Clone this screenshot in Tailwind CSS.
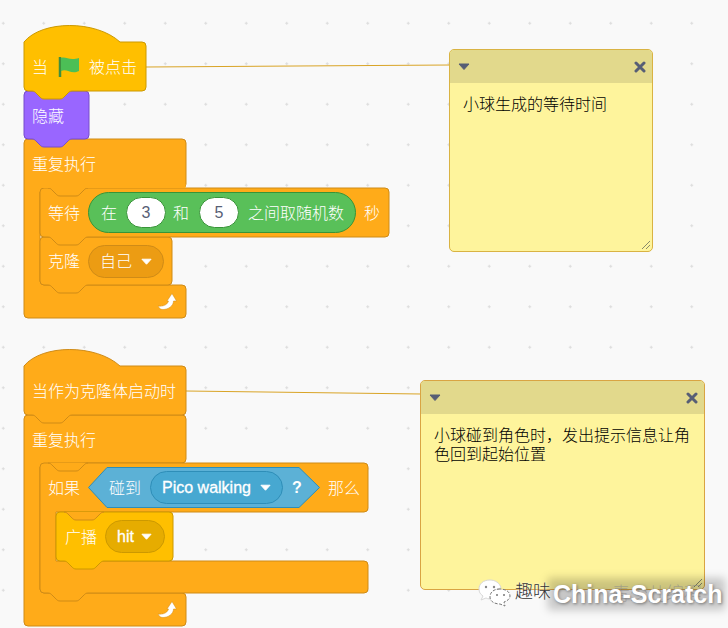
<!DOCTYPE html>
<html lang="zh">
<head>
  <meta charset="UTF-8" />
  <title>Scratch 脚本</title>
  <script src="https://cdn.jsdelivr.net/npm/@tailwindcss/browser@4"></script>
</head>
<body class="bg-[#f9f9f9]">
  <!-- workspace: blocks and comments sit on a free canvas -->
  <div class="relative w-[728px] h-[628px] overflow-hidden bg-[#f9f9f9] bg-[radial-gradient(circle,#dcdcdc_1px,transparent_1.4px)] bg-[size:40.5px_40.5px] bg-[position:-17px_3px] font-['Liberation_Sans','Noto_Sans_CJK_SC',sans-serif] font-light text-[16px] text-white">

    <!-- block shapes, drawn bottom up so tabs lie on the block below -->
    <svg class="absolute left-0 top-0" width="728" height="628" viewBox="0 0 728 628">
      <!-- comment links -->
      <path d="M146 67 L450 65" stroke="#d9a426" stroke-width="1" fill="none" />
      <path d="M186 391 L421 394" stroke="#d9a426" stroke-width="1" fill="none" />

      <!-- stack 1: repeat -->
      <path fill="#ffab19" stroke="#cf8b17" d="M24 143 q0-4 4-4 H182 q4 0 4 4 V184 q0 4-4 4 H88 L56 188 L40 192 V281 q0 4 4 4 H182 q4 0 4 4 V314 q0 4-4 4 H28 q-4 0-4-4 Z" />
      <path fill="#ffab19" stroke="#cf8b17" d="M40 241 q0-4 4-4 H168 q4 0 4 4 V281 q0 4-4 4 H88 c-2 0-3 1-4 2 l-4 4 c-1 1-2 2-4 2 H60 c-2 0-3-1-4-2 l-4-4 c-1-1-2-2-4-2 H44 q-4 0-4-4 Z" />
      <path fill="#ffab19" stroke="#cf8b17" d="M40 192 q0-4 4-4 H385 q4 0 4 4 V233 q0 4-4 4 H88 c-2 0-3 1-4 2 l-4 4 c-1 1-2 2-4 2 H60 c-2 0-3-1-4-2 l-4-4 c-1-1-2-2-4-2 H44 q-4 0-4-4 Z" />
      <path fill="#ffab19" stroke="#cf8b17" d="M48 188 c2 0 3 1 4 2 l4 4 c1 1 2 2 4 2 H76 c2 0 3-1 4-2 l4-4 c1-1 2-2 4-2" />
      <rect x="40.500" y="184" width="145" height="4" fill="#ffab19" />
      <path fill="#9966ff" stroke="#774dcb" d="M24 95 q0-4 4-4 H85 q4 0 4 4 V135 q0 4-4 4 H72 c-2 0-3 1-4 2 l-4 4 c-1 1-2 2-4 2 H44 c-2 0-3-1-4-2 l-4-4 c-1-1-2-2-4-2 H28 q-4 0-4-4 Z" />
      <path fill="#ffbf00" stroke="#cc9900" d="M24 42 C42 20 96 20 120 42 H142 q4 0 4 4 V87 q0 4-4 4 H72 c-2 0-3 1-4 2 l-4 4 c-1 1-2 2-4 2 H44 c-2 0-3-1-4-2 l-4-4 c-1-1-2-2-4-2 H28 q-4 0-4-4 Z" />

      <!-- stack 2: repeat with if -->
      <path fill="#ffab19" stroke="#cf8b17" d="M24 419 q0-4 4-4 H182 q4 0 4 4 V459 q0 4-4 4 H88 L40 467 V589 q0 4 4 4 H182 q4 0 4 4 V622 q0 4-4 4 H28 q-4 0-4-4 Z" />
      <path fill="#ffab19" stroke="#cf8b17" d="M40 467 q0-4 4-4 H364 q4 0 4 4 V508 q0 4-4 4 H104 L56 512 V561 H364 q4 0 4 4 V589 q0 4-4 4 H88 c-2 0-3 1-4 2 l-4 4 c-1 1-2 2-4 2 H60 c-2 0-3-1-4-2 l-4-4 c-1-1-2-2-4-2 H44 q-4 0-4-4 Z" />
      <path fill="#ffab19" stroke="#cf8b17" d="M48 463 c2 0 3 1 4 2 l4 4 c1 1 2 2 4 2 H76 c2 0 3-1 4-2 l4-4 c1-1 2-2 4-2" />
      <path fill="#ffbf00" stroke="#cc9900" d="M56 516 q0-4 4-4 H169 q4 0 4 4 V557 q0 4-4 4 H104 c-2 0-3 1-4 2 l-4 4 c-1 1-2 2-4 2 H76 c-2 0-3-1-4-2 l-4-4 c-1-1-2-2-4-2 H60 q-4 0-4-4 Z" />
      <path fill="#ffab19" stroke="#cf8b17" d="M64 512 c2 0 3 1 4 2 l4 4 c1 1 2 2 4 2 H92 c2 0 3-1 4-2 l4-4 c1-1 2-2 4-2" />
      <path fill="#ffab19" stroke="#cf8b17" d="M24 366 C42 344 96 344 120 366 H182 q4 0 4 4 V411 q0 4-4 4 H72 c-2 0-3 1-4 2 l-4 4 c-1 1-2 2-4 2 H44 c-2 0-3-1-4-2 l-4-4 c-1-1-2-2-4-2 H28 q-4 0-4-4 Z" />
    </svg>

    <!-- stack 1 labels -->
    <div class="absolute left-[24px] top-[42px] flex flex-col">
      <div class="h-[49px] pl-2 flex items-center">
        <span class="translate-y-px">当</span>
        <svg class="ml-[10px] mr-[9px]" width="22" height="22" viewBox="0 0 22 22">
          <path d="M2 1 V21" stroke="#3f8f3f" stroke-width="2.500" fill="none" />
          <path d="M3 2 C8 0 11 5 21 2 V15 C13 19 9 12 3 15 Z" fill="#4cbf56" />
        </svg>
        <span class="translate-y-px">被点击</span>
      </div>
      <div class="h-[48px] pl-2 flex items-center"><span class="translate-y-[2px]">隐藏</span></div>
      <div class="h-[49px] pl-2 flex items-center"><span class="translate-y-px">重复执行</span></div>
      <div class="h-[49px] pl-6 flex items-center">
        <span class="mr-2 translate-y-px">等待</span>
        <div class="h-[41px] w-[268px] rounded-full bg-[#59c059] border border-[#389438] flex items-center pl-3">
          <span class="translate-y-px">在</span>
          <span class="ml-[9px] w-[40px] h-[31px] rounded-full bg-white border border-[#389438] flex items-center justify-center text-[#575e75]">3</span>
          <span class="ml-[7px] translate-y-px">和</span>
          <span class="ml-[10px] w-[40px] h-[31px] rounded-full bg-white border border-[#389438] flex items-center justify-center text-[#575e75]">5</span>
          <span class="ml-[9px] whitespace-nowrap translate-y-px">之间取随机数</span>
        </div>
        <span class="ml-2 translate-y-px">秒</span>
      </div>
      <div class="h-[48px] pl-6 flex items-center">
        <span class="mr-2 translate-y-px">克隆</span>
        <div class="h-[33px] w-[76px] rounded-full bg-[#ec9c13] border border-[#cf8b17] flex items-center pl-[11px]">
          <span class="translate-y-px">自己</span>
          <svg class="ml-[9px]" width="11" height="7" viewBox="0 0 12 7"><path d="M1 1 H11 L6 6.500 Z" fill="#fff" stroke="#fff" stroke-linejoin="round" /></svg>
        </div>
      </div>
      <div class="h-[33px] w-[162px] pr-[9px] flex items-center justify-end">
        <svg width="19" height="17" viewBox="0 0 19 17"><path d="M14 0.500 L18.500 8 L15.500 8 C15.500 13 10 16.500 5 16.500 C3 16.500 1 15.500 0 13 C3 13.500 9 13 10.500 8 L9 8 Z" fill="#fff" stroke="#cf8b17" stroke-width="0.500" /></svg>
      </div>
    </div>

    <!-- stack 2 labels -->
    <div class="absolute left-[24px] top-[366px] flex flex-col">
      <div class="h-[49px] pl-2 flex items-center"><span class="translate-y-px">当作为克隆体启动时</span></div>
      <div class="h-[48px] pl-2 flex items-center"><span class="translate-y-[2px]">重复执行</span></div>
      <div class="h-[49px] pl-6 flex items-center">
        <span class="mr-2 translate-y-px">如果</span>
        <div class="relative h-[41px] w-[232px] flex items-center pl-[21px]">
          <svg class="absolute left-0 top-0" width="232" height="41" viewBox="0 0 232 41"><path d="M0.500 20.500 L19 0.500 H211 L231.500 20.500 L211 40.500 H19 Z" fill="#5cb1d6" stroke="#2e8eb8" /></svg>
          <span class="relative translate-y-px">碰到</span>
          <div class="relative ml-[9px] h-[33px] w-[133px] rounded-full bg-[#47a8d1] border border-[#2e8eb8] flex items-center pl-[11px]">
            <span class="font-normal whitespace-nowrap [-webkit-text-stroke:0.3px_#fff]">Pico walking</span>
            <svg class="ml-[9px]" width="11" height="7" viewBox="0 0 12 7"><path d="M1 1 H11 L6 6.500 Z" fill="#fff" stroke="#fff" stroke-linejoin="round" /></svg>
          </div>
          <span class="relative ml-[9px] font-bold">?</span>
        </div>
        <span class="ml-2 translate-y-px">那么</span>
      </div>
      <div class="h-[49px] pl-[41px] flex items-center">
        <span class="mr-[8px] translate-y-px">广播</span>
        <div class="h-[33px] w-[60px] rounded-full bg-[#e6ac00] border border-[#cc9900] flex items-center pl-[11px]">
          <span class="font-normal [-webkit-text-stroke:0.3px_#fff]">hit</span>
          <svg class="ml-[7px]" width="11" height="7" viewBox="0 0 12 7"><path d="M1 1 H11 L6 6.500 Z" fill="#fff" stroke="#fff" stroke-linejoin="round" /></svg>
        </div>
      </div>
      <div class="h-[32px]"></div>
      <div class="h-[33px] w-[162px] pr-[9px] flex items-center justify-end">
        <svg width="19" height="17" viewBox="0 0 19 17"><path d="M14 0.500 L18.500 8 L15.500 8 C15.500 13 10 16.500 5 16.500 C3 16.500 1 15.500 0 13 C3 13.500 9 13 10.500 8 L9 8 Z" fill="#fff" stroke="#cf8b17" stroke-width="0.500" /></svg>
      </div>
    </div>

    <!-- comment 1 -->
    <div class="absolute left-[449px] top-[49px] w-[204px] h-[203px] rounded-[5px] bg-[#fef49c] border border-[#d9b343] flex flex-col text-black overflow-hidden">
      <div class="h-[33px] bg-[#e2d98c] flex items-center justify-between pl-[8px] pr-[6px]">
        <svg width="12" height="7" viewBox="0 0 12 7"><path d="M1 1 H11 L6 6.500 Z" fill="#575e75" stroke="#575e75" stroke-linejoin="round" /></svg>
        <svg width="12" height="12" viewBox="0 0 12 12"><path d="M2 2 L10 10 M10 2 L2 10" stroke="#575e75" stroke-width="3" stroke-linecap="round" /></svg>
      </div>
      <p class="px-[13px] pt-[12px] leading-[19px]">小球生成的等待时间</p>
      <svg class="absolute right-[1px] bottom-[1px]" width="10" height="10" viewBox="0 0 10 10"><path d="M1 9 L9 1 M5 9 L9 5" stroke="#8a8a6a" stroke-width="1" /></svg>
    </div>

    <!-- comment 2 -->
    <div class="absolute left-[420px] top-[380px] w-[285px] h-[210px] rounded-[5px] bg-[#fef49c] border border-[#d9a443] flex flex-col text-black overflow-hidden">
      <div class="h-[33px] bg-[#e2d98c] flex items-center justify-between pl-[8px] pr-[6px]">
        <svg width="12" height="7" viewBox="0 0 12 7"><path d="M1 1 H11 L6 6.500 Z" fill="#575e75" stroke="#575e75" stroke-linejoin="round" /></svg>
        <svg width="12" height="12" viewBox="0 0 12 12"><path d="M2 2 L10 10 M10 2 L2 10" stroke="#575e75" stroke-width="3" stroke-linecap="round" /></svg>
      </div>
      <p class="px-[13px] pt-[12px] leading-[19px]">小球碰到角色时，发出提示信息让角色回到起始位置</p>
      <svg class="absolute right-[1px] bottom-[1px]" width="10" height="10" viewBox="0 0 10 10"><path d="M1 9 L9 1 M5 9 L9 5" stroke="#8a8a6a" stroke-width="1" /></svg>
    </div>

    <!-- watermark -->
    <div class="absolute left-[548px] top-[578px] w-[177px] h-[32px] bg-black/20 blur-[4px]"></div>
    <div class="absolute left-[477px] top-[578px] flex items-center">
      <svg width="34" height="29" viewBox="0 0 34 29">
        <path d="M13 2 C6 2 2 6 2 11 C2 14 3 16 6 18 L4 22 L9 20 C11 21 13 21 15 21 C14 15 18 11 24 10 C23 5 18 2 13 2 Z" fill="#fff" stroke="#d8d8d8" stroke-width="1" />
        <path d="M23 11 C17 11 13 14 13 19 C13 23 17 26 23 26 L28 28 L27 24 C30 23 33 21 33 18 C33 14 29 11 23 11 Z" fill="#fff" stroke="#777" stroke-width="1" stroke-dasharray="3 1.500" />
        <circle cx="9" cy="9" r="1.200" fill="#888" />
        <circle cx="17" cy="9" r="1.200" fill="#888" />
        <circle cx="20" cy="17" r="1" fill="#777" />
        <circle cx="27" cy="17" r="1" fill="#777" />
      </svg>
      <span class="ml-[4px] text-[18px] text-[#333] [text-shadow:0_0_2px_#fff]">趣味</span>
    </div>
    <div class="absolute left-[612px] top-[582px] text-[18px] leading-[24px] text-[#8a8a8a]/60 whitespace-nowrap">青少儿编程</div>
    <div class="absolute left-[553px] top-[579px] text-[25px] leading-[30px] font-bold text-white whitespace-nowrap [text-shadow:1px_1px_3px_#777]">China-Scratch</div>
  </div>
</body>
</html>
